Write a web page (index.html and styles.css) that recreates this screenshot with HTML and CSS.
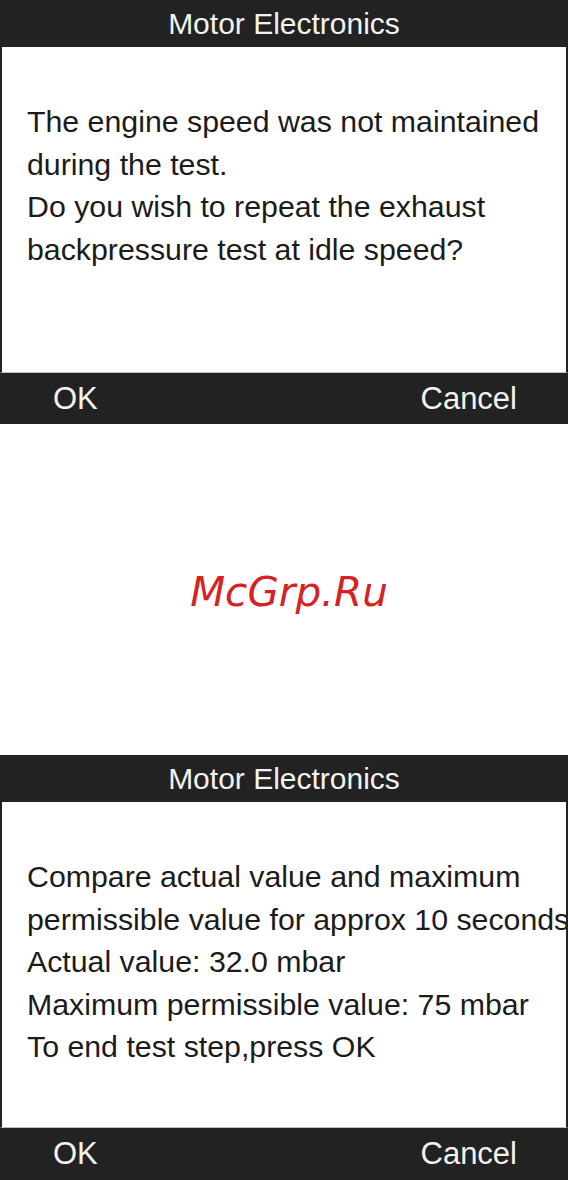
FILE: index.html
```html
<!DOCTYPE html>
<html>
<head>
<meta charset="utf-8">
<link rel="stylesheet" href="styles.css">
</head>
<body>
<div class="page">
  <section class="screen">
    <div class="title">Motor Electronics</div>
    <div class="content">
      <p>The engine speed was not maintained</p>
      <p>during the test.</p>
      <p>Do you wish to repeat the exhaust</p>
      <p>backpressure test at idle speed?</p>
    </div>
    <div class="footer"><span>OK</span><span>Cancel</span></div>
  </section>
  <div class="gap"><span class="watermark">McGrp.Ru</span></div>
  <section class="screen">
    <div class="title">Motor Electronics</div>
    <div class="content">
      <p>Compare actual value and maximum</p>
      <p>permissible value for approx 10 seconds</p>
      <p>Actual value: 32.0 mbar</p>
      <p>Maximum permissible value: 75 mbar</p>
      <p>To end test step,press OK</p>
    </div>
    <div class="footer last"><span>OK</span><span>Cancel</span></div>
  </section>
</div>
</body>
</html>
```
FILE: styles.css
```css
html, body { margin: 0; padding: 0; background: #fff; }
.page { width: 568px; display: flex; flex-direction: column; font-family: "Liberation Sans", Arial, sans-serif; }
.screen { display: flex; flex-direction: column; }
.title { height: 47px; background: #222; color: #f2f2f2; font-size: 30px; display: flex; align-items: center; justify-content: center; }
.content { height: 326px; box-sizing: border-box; border-left: 2px solid #222; border-right: 2px solid #222; border-bottom: 1px solid #bbb; padding: 54px 0 0 25px; overflow: hidden; white-space: nowrap; color: #1b1b1b; font-size: 30.3px; line-height: 42.5px; }
.content p { margin: 0; }
.footer { height: 51px; background: #222; color: #f2f2f2; font-size: 31px; display: flex; align-items: center; justify-content: space-between; padding: 0 51px 0 53px; }
.footer.last { height: 52px; }
.gap { height: 331px; display: flex; align-items: center; justify-content: center; }
.watermark { font-family: "DejaVu Sans", sans-serif; font-style: italic; color: #d62222; font-size: 40.5px; margin-left: 10px; margin-top: 4px; }
```
